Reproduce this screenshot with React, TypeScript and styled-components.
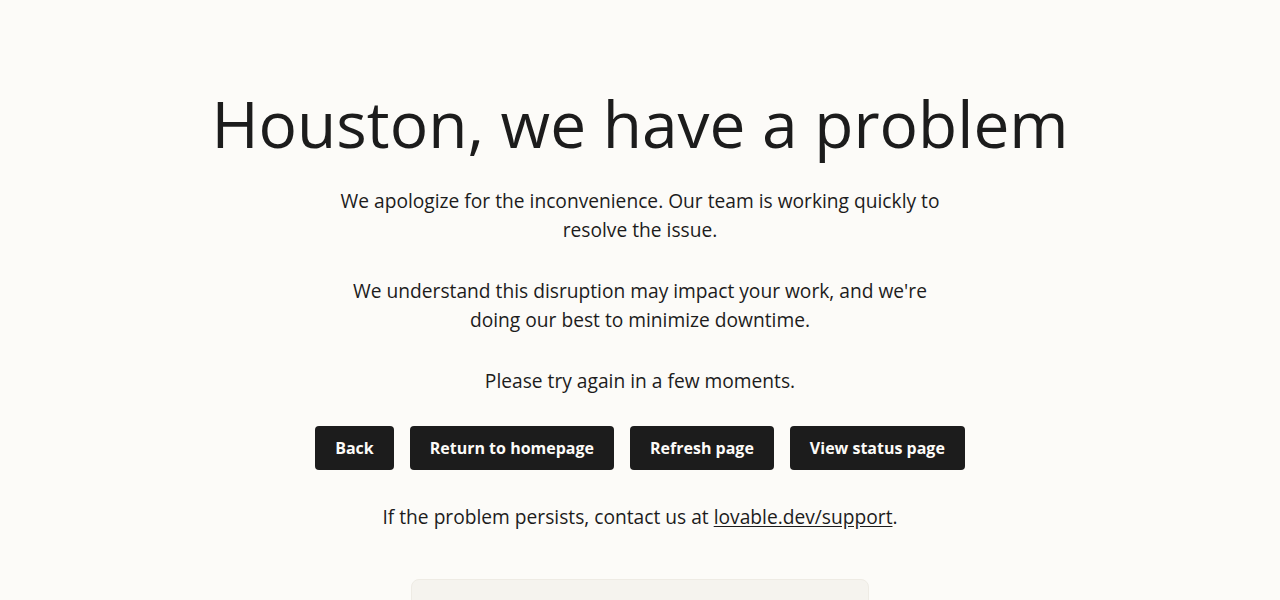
import React from "react";
import styled, { createGlobalStyle } from "styled-components";

const Global = createGlobalStyle`
  html, body { margin: 0; padding: 0; background: #fcfbf8; }
  body { font-family: "Open Sans", "Noto Sans", sans-serif; color: #1c1c1c; }
  * { box-sizing: border-box; }
`;

const Page = styled.main`
  min-height: 100vh;
  display: flex;
  flex-direction: column;
  align-items: center;
  padding: 84px 24px 40px;
  text-align: center;
`;

const Title = styled.h1`
  margin: 0 0 22px;
  font-size: 64px;
  font-weight: 400;
  line-height: 1.25;
  letter-spacing: 0;
`;

const Text = styled.p`
  margin: 0 0 32px;
  max-width: 612px;
  font-size: 19.2px;
  line-height: 29px;
  color: #1c1c1c;
`;

const Actions = styled.div`
  display: flex;
  gap: 16px;
  justify-content: center;
  margin: -1px 0 32px;
`;

const Button = styled.button`
  height: 44px;
  padding: 0 20px;
  border: none;
  border-radius: 4px;
  background: #1c1c1c;
  color: #fcfbf8;
  font-family: "Open Sans", "Noto Sans", sans-serif;
  font-size: 16px;
  font-weight: 700;
  cursor: pointer;
`;

const Support = styled.p`
  margin: 0 0 48px;
  font-size: 19.2px;
  line-height: 29px;
`;

const Link = styled.a`
  color: inherit;
  text-decoration: underline;
  text-underline-offset: 2px;
`;

const Card = styled.div`
  width: 458px;
  height: 120px;
  background: #f5f3ee;
  border: 1px solid #eeebe4;
  border-radius: 8px;
`;

export default function App() {
  return (
    <>
      <Global />
      <Page>
        <Title>Houston, we have a problem</Title>
        <Text>
          We apologize for the inconvenience. Our team is working quickly to
          resolve the issue.
        </Text>
        <Text>
          We understand this disruption may impact your work, and we're doing
          our best to minimize downtime.
        </Text>
        <Text>Please try again in a few moments.</Text>
        <Actions>
          <Button>Back</Button>
          <Button>Return to homepage</Button>
          <Button>Refresh page</Button>
          <Button>View status page</Button>
        </Actions>
        <Support>
          If the problem persists, contact us at{" "}
          <Link href="#">lovable.dev/support</Link>.
        </Support>
        <Card />
      </Page>
    </>
  );
}
